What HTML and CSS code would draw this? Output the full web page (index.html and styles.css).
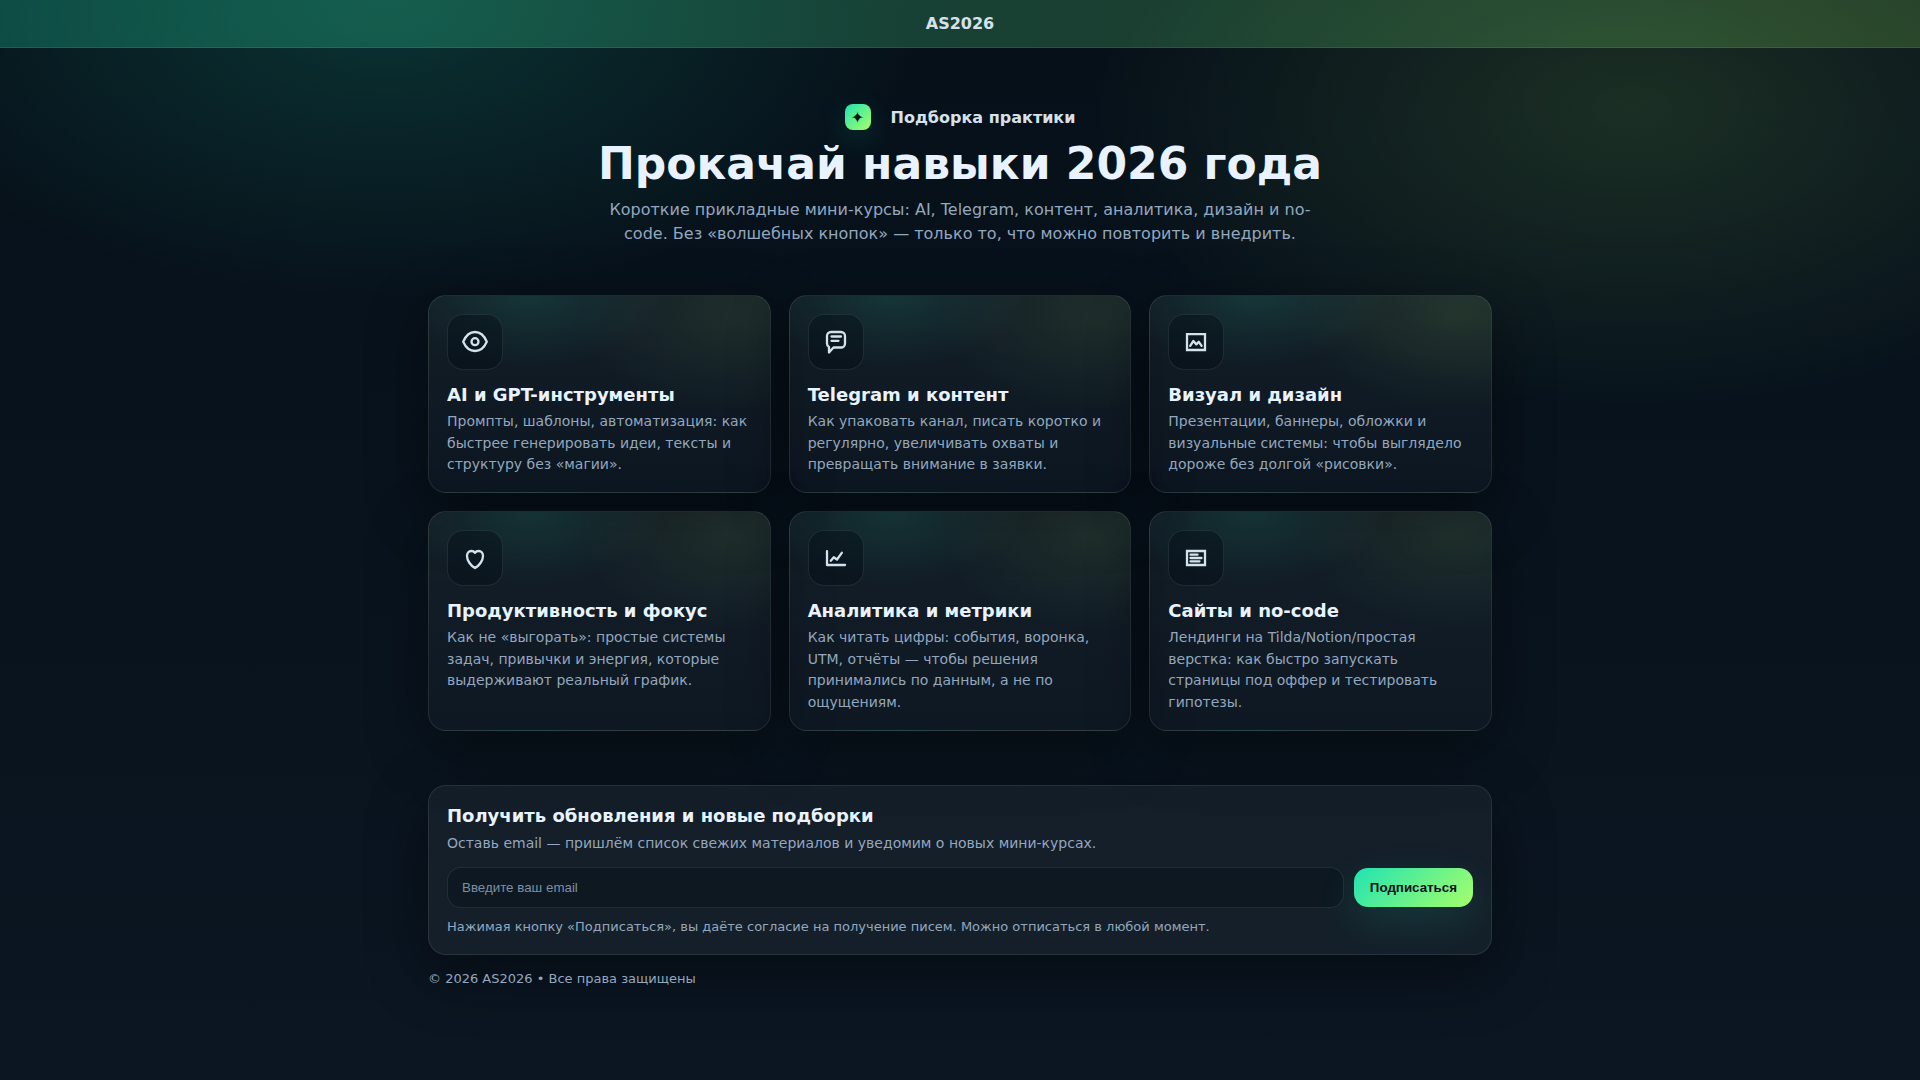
FILE: index.html
```
<!DOCTYPE html>
<html lang="ru">
<head>
    <meta charset="UTF-8">
    <meta name="viewport" content="width=device-width, initial-scale=1.0">
    <title>AS2026 — Прокачай навыки 2026 года</title>
    <link rel="stylesheet" href="styles.css">
</head>
<body>
    <header class="topbar">AS2026</header>

    <main class="container">
        <!-- Заголовок -->
        <section class="hero">
            <div class="brand">
                <span class="brand-mark">✦</span>
                <span>Подборка практики</span>
            </div>
            <h1>Прокачай навыки 2026 года</h1>
            <p>Короткие прикладные мини-курсы: AI, Telegram, контент, аналитика, дизайн и no-code. Без «волшебных кнопок» — только то, что можно повторить и внедрить.</p>
        </section>

        <!-- Карточки курсов -->
        <section class="grid">
            <article class="card">
                <div class="icon">
                    <svg viewBox="0 0 28 28" aria-hidden="true">
                        <path d="M2.2 13.7C5 7.2 9 4 14 4s9 3.2 11.8 9.7C23 20 19 23 14 23S5 20 2.2 13.7z"/>
                        <circle cx="14" cy="13.7" r="3.5"/>
                    </svg>
                </div>
                <h3>AI и GPT-инструменты</h3>
                <p>Промпты, шаблоны, автоматизация: как быстрее генерировать идеи, тексты и структуру без «магии».</p>
            </article>

            <article class="card">
                <div class="icon">
                    <svg viewBox="0 0 28 28" aria-hidden="true">
                        <path d="M9 4h10a4 4 0 0 1 4 4v7.500a4 4 0 0 1-4 4h-7.500L7 24.500v-5.500a4 4 0 0 1-2-3.500V8a4 4 0 0 1 4-4z"/>
                        <path d="M9.5 8.5h9.5M9.5 12.8h7"/>
                    </svg>
                </div>
                <h3>Telegram и контент</h3>
                <p>Как упаковать канал, писать коротко и регулярно, увеличивать охваты и превращать внимание в заявки.</p>
            </article>

            <article class="card">
                <div class="icon">
                    <svg viewBox="0 0 28 28" aria-hidden="true">
                        <path class="sharp" d="M5 6.200h18v15.800H5z"/>
                        <path d="M8.2 17.8l3.2-4.8 3 3.4 2.4-2.6 2.8 4"/>
                    </svg>
                </div>
                <h3>Визуал и дизайн</h3>
                <p>Презентации, баннеры, обложки и визуальные системы: чтобы выглядело дороже без долгой «рисовки».</p>
            </article>

            <article class="card">
                <div class="icon">
                    <svg viewBox="0 0 28 28" aria-hidden="true">
                        <path d="M14 24C9.5 21.5 6 16.5 6 12c0-3.200 2-5 4.200-5 1.600 0 3 .5 3.800 1.800C14.800 7.500 16.200 7 17.800 7 20 7 22 8.800 22 12c0 4.500-3.500 9.500-8 12z"/>
                    </svg>
                </div>
                <h3>Продуктивность и фокус</h3>
                <p>Как не «выгорать»: простые системы задач, привычки и энергия, которые выдерживают реальный график.</p>
            </article>

            <article class="card">
                <div class="icon">
                    <svg viewBox="0 0 28 28" aria-hidden="true">
                        <path d="M5 7.200V21h18"/>
                        <path d="M8.8 16.8l3-3.6 3.2 2.3 4.8-6.7"/>
                    </svg>
                </div>
                <h3>Аналитика и метрики</h3>
                <p>Как читать цифры: события, воронка, UTM, отчёты — чтобы решения принимались по данным, а не по ощущениям.</p>
            </article>

            <article class="card">
                <div class="icon">
                    <svg viewBox="0 0 28 28" aria-hidden="true">
                        <path class="sharp" d="M5 7h18v14H5z"/>
                        <path d="M8.5 10.7h7M8.5 14h11M8.5 17.3h9"/>
                    </svg>
                </div>
                <h3>Сайты и no-code</h3>
                <p>Лендинги на Tilda/Notion/простая верстка: как быстро запускать страницы под оффер и тестировать гипотезы.</p>
            </article>
        </section>

        <!-- Подписка -->
        <section class="subscribe">
            <h2>Получить обновления и новые подборки</h2>
            <p>Оставь email — пришлём список свежих материалов и уведомим о новых мини-курсах.</p>
            <form class="form">
                <input type="email" aria-label="Email" placeholder="Введите ваш email" required>
                <button type="submit">Подписаться</button>
            </form>
            <small>Нажимая кнопку «Подписаться», вы даёте согласие на получение писем. Можно отписаться в любой момент.</small>
        </section>

        <footer>© 2026 AS2026 • Все права защищены</footer>
    </main>
</body>
</html>
```
FILE: styles.css
```
:root {
    --text: #e8f3ff;
    --soft: #d5e2ec;
    --muted: #93a7bf;
    --line: rgba(255, 255, 255, 0.09);
    --accent: linear-gradient(135deg, #20e3b2, #a6ff6a);
    --shadow: 0 18px 60px rgba(0, 0, 0, 0.45);
}

* {
    box-sizing: border-box;
}

body {
    margin: 0;
    min-height: 100vh;
    font-family: "DejaVu Sans", sans-serif;
    color: var(--text);
    background:
        radial-gradient(900px 500px at 20% 0%, rgba(32, 227, 178, 0.17), transparent 60%),
        radial-gradient(900px 500px at 85% 10%, rgba(166, 255, 106, 0.13), transparent 60%),
        linear-gradient(180deg, #061019, #0b1622);
}

/* Верхняя полоса */
.topbar {
    padding: 14px 18px;
    text-align: center;
    font-size: 16px;
    line-height: 19px;
    font-weight: 700;
    color: var(--soft);
    background: linear-gradient(90deg, rgba(32, 227, 178, 0.25), rgba(166, 255, 106, 0.18));
    border-bottom: 1px solid var(--line);
}

.container {
    max-width: 1100px;
    margin: 0 auto;
    padding: 56px 18px;
}

/* Заголовок */
.hero {
    text-align: center;
    margin-bottom: 49px;
}

.brand {
    display: flex;
    justify-content: center;
    align-items: center;
    gap: 20px;
    font-weight: 700;
    color: var(--soft);
}

.brand-mark {
    display: grid;
    place-items: center;
    width: 26px;
    height: 26px;
    border-radius: 8px;
    font-size: 16px;
    color: #06121a;
    background: var(--accent);
    box-shadow: 0 10px 30px rgba(32, 227, 178, 0.18);
}

h1 {
    margin: 10px 0;
    font-size: 44px;
    line-height: 48px;
}

.hero p {
    max-width: 720px;
    margin: 0 auto;
    font-size: 16px;
    line-height: 24px;
    color: var(--muted);
}

/* Карточки */
.grid {
    display: grid;
    grid-template-columns: repeat(3, 1fr);
    gap: 18px;
}

.card {
    padding: 18px 18px 16px;
    border: 1px solid var(--line);
    border-radius: 18px;
    background:
        radial-gradient(220px 120px at 30% 0%, rgba(32, 227, 178, 0.12), transparent 60%),
        radial-gradient(260px 160px at 90% 10%, rgba(166, 255, 106, 0.08), transparent 60%),
        linear-gradient(180deg, rgba(255, 255, 255, 0.05), rgba(255, 255, 255, 0.02));
    box-shadow: var(--shadow);
}

.icon {
    display: grid;
    place-items: center;
    width: 56px;
    height: 56px;
    margin-bottom: 14px;
    border: 1px solid var(--line);
    border-radius: 16px;
    background: rgba(5, 13, 22, 0.45);
}

.icon svg {
    width: 28px;
    height: 28px;
    fill: none;
    stroke: var(--soft);
    stroke-width: 2.3;
    stroke-linecap: round;
    stroke-linejoin: round;
}

.icon .sharp {
    stroke-linejoin: miter;
}

.card h3 {
    margin: 0 0 6px;
    font-size: 18px;
    line-height: 21px;
}

.card p {
    margin: 0;
    font-size: 14px;
    line-height: 1.55;
    color: var(--muted);
}

/* Форма подписки */
.subscribe {
    margin-top: 54px;
    padding: 18px;
    border: 1px solid var(--line);
    border-radius: 18px;
    background: rgba(255, 255, 255, 0.045);
    box-shadow: var(--shadow);
}

.subscribe h2 {
    margin: 0;
    font-size: 18px;
    line-height: 23px;
}

.subscribe p {
    margin: 6px 0 14px;
    font-size: 14px;
    line-height: 20px;
    color: var(--muted);
}

.form {
    display: flex;
    align-items: center;
    gap: 10px;
}

.form input {
    flex: 1;
    min-width: 0;
    height: 41px;
    padding: 0 14px;
    border: 1px solid var(--line);
    border-radius: 14px;
    outline: none;
    font-family: "Liberation Sans", Arial, sans-serif;
    color: var(--text);
    background: rgba(7, 18, 27, 0.55);
}

.form input::placeholder {
    color: #7d8fa3;
}

.form button {
    height: 39px;
    padding: 0 16px;
    border: 0;
    border-radius: 14px;
    font-family: "Liberation Sans", Arial, sans-serif;
    font-weight: 700;
    color: #06121a;
    background: var(--accent);
    box-shadow: 0 14px 40px rgba(32, 227, 178, 0.14);
    cursor: pointer;
}

.subscribe small {
    display: block;
    margin-top: 10px;
    font-size: 13px;
    line-height: 18px;
    color: var(--muted);
}

footer {
    margin-top: 16px;
    font-size: 13px;
    line-height: 16px;
    color: var(--muted);
}

@media (max-width: 860px) {
    .grid {
        grid-template-columns: 1fr;
    }

    h1 {
        font-size: 32px;
        line-height: 40px;
    }
}
```
